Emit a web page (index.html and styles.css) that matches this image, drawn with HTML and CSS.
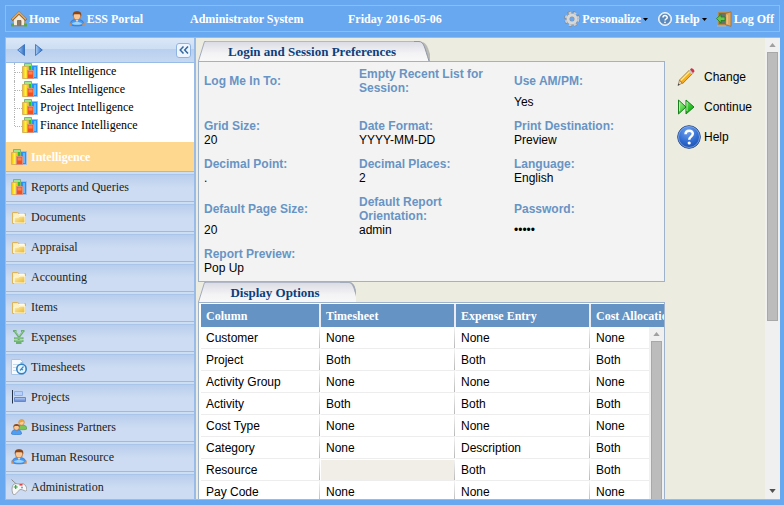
FILE: index.html
```
<!DOCTYPE html>
<html lang="en">
<head>
<meta charset="utf-8">
<title>Login and Session Preferences</title>
<link rel="stylesheet" href="styles.css">
</head>
<body>
<svg class="defs" aria-hidden="true">
  <defs>
    <linearGradient id="gold" x1="0" y1="0" x2="1" y2="1"><stop offset="0" stop-color="#fdf3c0"/><stop offset="1" stop-color="#e9b422"/></linearGradient>
    <linearGradient id="steel" x1="0" y1="0" x2="0" y2="1"><stop offset="0" stop-color="#b7cff7"/><stop offset="1" stop-color="#5f84cf"/></linearGradient>
    <linearGradient id="arrow" x1="0" y1="0" x2="1" y2="0"><stop offset="0" stop-color="#a9cdf5"/><stop offset="1" stop-color="#2f6fc4"/></linearGradient>
    <linearGradient id="tabfill" x1="0" y1="0" x2="0" y2="1"><stop offset="0" stop-color="#dcdce6"/><stop offset=".6" stop-color="#f3f3f5"/><stop offset="1" stop-color="#f8f8f8"/></linearGradient>
    <radialGradient id="orb" cx=".45" cy=".25" r=".8"><stop offset="0" stop-color="#6fa2ee"/><stop offset=".6" stop-color="#2f6bd0"/><stop offset="1" stop-color="#1a4ba8"/></radialGradient>
    <linearGradient id="lime" x1="0" y1="0" x2="1" y2="1"><stop offset="0" stop-color="#b8f5a0"/><stop offset=".6" stop-color="#2fc42a"/><stop offset="1" stop-color="#148a14"/></linearGradient>
    <linearGradient id="yel" x1="0" y1="0" x2="1" y2="0"><stop offset="0" stop-color="#f5b800"/><stop offset=".5" stop-color="#fff04a"/><stop offset="1" stop-color="#f0b400"/></linearGradient>
  </defs>
  <symbol id="bars" viewBox="0 0 16 16">
    <path d="M9.500 2.500h6v13h-6z" fill="#2494fa" stroke="#a3bfe6"/>
    <path d="M12 4h2v10h-2z" fill="#66b8ff"/>
    <path d="M2.500.500h7v8h-7z" fill="#2fc02a" stroke="#7fb57c"/>
    <path d="M3 1h6v2H3z" fill="#9be88f"/>
    <path d="M.500 3.500h6v12h-6z" fill="url(#yel)" stroke="#d9b45c"/>
    <path d="M5.500 7.500h6v8h-6z" fill="#f4501f" stroke="#dc8f78"/>
    <path d="M6.500 8.500h4v3h-4z" fill="#ff8350"/>
  </symbol>
  <symbol id="folder" viewBox="0 0 16 16">
    <path d="M1.500 14.500v-11h5l1.500 1h6.500v10z" fill="#fbe7a0" stroke="#dcb25a"/>
    <path d="M2.500 5.500h5l1-1h5v2h-11z" fill="#fffbe8"/>
    <path d="M3 8h4.500l1.500-1h5v7H3z" fill="url(#gold)" stroke="#fffdf0"/>
  </symbol>
  <symbol id="person" viewBox="0 0 16 16">
    <path d="M1.200 13.500c0-3.500 2.300-5 6.800-5s6.800 1.500 6.800 5c-1 1.800-12.600 1.800-13.600 0z" fill="#4699f2" stroke="#2a6cc0" stroke-width=".7"/>
    <path d="M3 12.500c2-2 8-2 10 0-1 1.800-9 1.800-10 0z" fill="#9ad4ff"/>
    <path d="M1 11.500v2.500h1.800M15 11.500v2.500h-1.800" fill="none" stroke="#d98f4d" stroke-width="1.300"/>
    <path d="M6 8h4l-2 3z" fill="#fff"/>
    <ellipse cx="8" cy="5" rx="3.700" ry="4" fill="#f9c898" stroke="#a9622c" stroke-width=".7"/>
    <path d="M3.800 5C3.500 1.500 5 .3 8 .3s4.800 1.200 4.200 4.700L11 3.200H5z" fill="#8a4519"/>
  </symbol>
  <symbol id="triangle" viewBox="0 0 8 5"><path d="M0 5 4 0l4 5z"/></symbol>
</svg>

<header class="topbar">
  <nav class="topbar-left">
    <a href="#" class="top-link">
      <svg class="icon" viewBox="0 0 16 16"><path d="M2.500 8v6.500h11V8L8 3z" fill="#f4ecd8" stroke="#b3a27e"/><path d="M.8 9 8 2l7.200 7" fill="none" stroke="#8d5a28" stroke-width="2.600"/><path d="M1 8.500 8 1.700l7 6.800" fill="none" stroke="#e0a860" stroke-width="1.600"/><path d="M6.500 9.500h3.500v5H6.500z" fill="#8e7c68" stroke="#6e5a45" stroke-width=".7"/><path d="M0 12.500h3v3H0zM13 12.500h3v3h-3z" fill="#5da348"/><path d="M3 15h10" stroke="#8f8b84"/></svg>
      Home</a>
    <a href="#" class="top-link"><svg class="icon"><use href="#person"/></svg>ESS Portal</a>
  </nav>
  <span class="top-user">Administrator System</span>
  <span class="top-date">Friday 2016-05-06</span>
  <nav class="topbar-right">
    <button type="button" class="top-link">
      <svg class="icon" viewBox="0 0 16 16"><circle cx="8" cy="8" r="6.500" fill="none" stroke="#85898e" stroke-width="3" stroke-dasharray="2.600 2.500"/><circle cx="8" cy="8" r="4" fill="none" stroke="#8c9298" stroke-width="4"/><circle cx="8" cy="8" r="4" fill="none" stroke="#d6d8da" stroke-width="3"/><circle cx="8" cy="8" r="6.300" fill="none" stroke="#c9cdd0" stroke-width="2" stroke-dasharray="2.600 2.500"/></svg>
      Personalize<svg class="caret" viewBox="0 0 5 3"><path d="M0 0h5L2.500 3z"/></svg></button>
    <button type="button" class="top-link">
      <svg class="icon" viewBox="0 0 16 16"><circle cx="8" cy="8" r="6.500" fill="#dce7f3" stroke="#eef4fb"/><circle cx="8" cy="8" r="5" fill="#5b8abf" stroke="#4a76a8" stroke-width=".6"/><path d="M6 6.500C6 4 10.200 4 10.200 6.400 10.200 8 8 8 8 9.500" fill="none" stroke="#fff" stroke-width="1.500"/><circle cx="8" cy="11.300" r=".9" fill="#fff"/></svg>
      Help<svg class="caret" viewBox="0 0 5 3"><path d="M0 0h5L2.500 3z"/></svg></button>
    <a href="#" class="top-link">
      <svg class="icon" viewBox="0 0 16 16"><path d="M2.500 1.500h12v12h-12z" fill="#69716d" stroke="#b58745"/><path d="M9.500 2.500 15 .800v14.500l-5.500-1.500z" fill="#dca964" stroke="#96662f" stroke-width=".7"/><path d="M11.200 4v9" stroke="#efcb91"/><path d="M.5 7.500 5 3.500V6h4v3.500H5v2.500z" fill="#66c94d" stroke="#267b27" stroke-width=".8"/><path d="M1 15h9" stroke="#b5b7b2"/></svg>
      Log Off</a>
  </nav>
</header>

<div class="workspace">
  <aside class="sidebar">
    <div class="side-tools">
      <button type="button" class="step" aria-label="Back"><svg viewBox="0 0 8 12"><path d="M7.500.500v11L.700 6z" fill="url(#arrow)" stroke="#2d68b8" stroke-width=".8"/></svg></button>
      <button type="button" class="step" aria-label="Forward"><svg viewBox="0 0 8 12"><path d="M.500.500v11L7.300 6z" fill="url(#arrow)" stroke="#2d68b8" stroke-width=".8"/></svg></button>
      <button type="button" class="collapse" aria-label="Collapse"><svg viewBox="0 0 10 8"><path d="M4.500.500 1.200 4l3.300 3.500M9 .500 5.700 4 9 7.500" fill="none" stroke="#3468a0" stroke-width="1.500"/></svg></button>
    </div>
    <ul class="tree">
      <li><a href="#"><svg class="icon"><use href="#bars"/></svg>HR Intelligence</a></li>
      <li><a href="#"><svg class="icon"><use href="#bars"/></svg>Sales Intelligence</a></li>
      <li><a href="#"><svg class="icon"><use href="#bars"/></svg>Project Intelligence</a></li>
      <li><a href="#"><svg class="icon"><use href="#bars"/></svg>Finance Intelligence</a></li>
    </ul>
    <nav class="sections">
      <button type="button" class="section is-active"><svg class="icon"><use href="#bars"/></svg>Intelligence</button>
      <button type="button" class="section"><svg class="icon"><use href="#bars"/></svg>Reports and Queries</button>
      <button type="button" class="section"><svg class="icon"><use href="#folder"/></svg>Documents</button>
      <button type="button" class="section"><svg class="icon"><use href="#folder"/></svg>Appraisal</button>
      <button type="button" class="section"><svg class="icon"><use href="#folder"/></svg>Accounting</button>
      <button type="button" class="section"><svg class="icon"><use href="#folder"/></svg>Items</button>
      <button type="button" class="section">
        <svg class="icon" viewBox="0 0 16 16"><path d="M2 2h3.500M10 2h3.500M3.500 2 8 8l4.500-6M7.700 7.500V14M3 9.300h9.500M3 12h9.500M5 14h5.500" fill="none" stroke="#6aae70" stroke-width="2"/><path d="m4 2 4 5 4-5M3.500 9h8M3.500 11.700h8" fill="none" stroke="#a5d6a4" stroke-width=".8"/></svg>Expenses</button>
      <button type="button" class="section">
        <svg class="icon" viewBox="0 0 16 16"><path d="M.5.500h9l3 3v12H.5z" fill="#f8fbff" stroke="#a9c6e6"/><path d="M2 5.500h8M2 8.500h5M2 11.500h3" stroke="#c5dcf0"/><circle cx="10.500" cy="10" r="4.700" fill="#e9f6ff" stroke="#3181c3" stroke-width="1.600"/><path d="m9 11.500 3.500-4M10.500 10l1.500 1M9.500 4h2.500" fill="none" stroke="#3c8ccc" stroke-width="1.200"/></svg>Timesheets</button>
      <button type="button" class="section">
        <svg class="icon" viewBox="0 0 16 16"><path d="M1.500 1v13.500" stroke="#263247"/><path d="M3.500 2.500h8v4h-8z" fill="#b6d0fb" stroke="#8eafe6"/><path d="M3.500 8.500h11v4h-11z" fill="url(#steel)" stroke="#6787c5"/></svg>Projects</button>
      <button type="button" class="section">
        <svg class="icon" viewBox="0 0 16 16"><path d="M6 10c0-3 2-4 5-4s5 1 4.800 4c-1 1-9 1-9.800 0z" fill="#7cc45a" stroke="#4c9440" stroke-width=".6"/><circle cx="10.500" cy="3.500" r="2.700" fill="#f9cc98" stroke="#b87a3b" stroke-width=".6"/><path d="M7.500 4C7.500 1 9 .300 10.700.300 13 .300 14 2 13.300 4l-1-1.500z" fill="#e6a23f"/><path d="M.5 15c0-3 1.500-4.500 5-4.500s5 1.500 5 4.500c-1 1-9 1-10 0z" fill="#4d9ff5" stroke="#2f6cbc" stroke-width=".6"/><circle cx="5.500" cy="8.500" r="2.800" fill="#f9c898" stroke="#9d5a2a" stroke-width=".6"/><path d="M2.500 8.500C2 6 3.500 5 5.500 5s3.600 1 3 3.500L7.500 7h-4z" fill="#8f4c1e"/></svg>Business Partners</button>
      <button type="button" class="section"><svg class="icon"><use href="#person"/></svg>Human Resource</button>
      <button type="button" class="section">
        <svg class="icon" viewBox="0 0 16 16"><path d="M5.500 5C4 4 3 3 .5 .5" fill="none" stroke="#8a8a8a"/><path d="M2.500 5.500c2-1.500 3.500-.5 5.500-.5s3.500-1 5.500.5c2 2 2.800 4.500 2 6-1 1.500-3.500-1-5.500-1s-2 1-3 2c-2 2.500-4 4-5 2.500C1 13 .3 8 2.500 5.500z" fill="#f8f8f8" stroke="#909090" stroke-width=".8"/><path d="M4.700 6v4M2.700 8h4" stroke="#35a33b" stroke-width="1.200"/><path d="M8.500 5.800h3" stroke="#e04545" stroke-width="1.600"/><circle cx="11" cy="8.500" r="1" fill="#8796bb"/></svg>Administration</button>
    </nav>
  </aside>

  <main class="content">
    <div class="panels">
      <section>
        <h2 class="tab">
          <svg class="tab-left" viewBox="0 0 8 20"><path d="M0 20 6.500.500H8V20z" fill="url(#tabfill)"/><path d="M.5 20 6.500.500H8" fill="none" stroke="#a2a9bd"/></svg>
          <span class="tab-text">Login and Session Preferences</span>
          <svg class="tab-right" viewBox="0 0 16 20"><path d="M6 1c6 0 7 3 10 12v7h-6z" fill="#b9bbb4"/><path d="M0 .5h5c5 0 5.500 6 10 19.500H0z" fill="url(#tabfill)"/><path d="M0 .5h5c5 0 5.500 6 10 19.500" fill="none" stroke="#8d97a8"/></svg>
        </h2>
        <dl class="fields">
          <div><dt>Log Me In To:</dt><dd></dd></div>
          <div><dt>Empty Recent List for Session:</dt><dd></dd></div>
          <div><dt>Use AM/PM:</dt><dd>Yes</dd></div>
          <div><dt>Grid Size:</dt><dd>20</dd></div>
          <div><dt>Date Format:</dt><dd>YYYY-MM-DD</dd></div>
          <div><dt>Print Destination:</dt><dd>Preview</dd></div>
          <div><dt>Decimal Point:</dt><dd>.</dd></div>
          <div><dt>Decimal Places:</dt><dd>2</dd></div>
          <div><dt>Language:</dt><dd>English</dd></div>
          <div><dt>Default Page Size:</dt><dd>20</dd></div>
          <div><dt>Default Report Orientation:</dt><dd>admin</dd></div>
          <div><dt>Password:</dt><dd>•••••</dd></div>
          <div><dt>Report Preview:</dt><dd>Pop Up</dd></div>
        </dl>
      </section>
      <section class="options">
        <h2 class="tab">
          <svg class="tab-left" viewBox="0 0 8 20"><path d="M0 20 6.500.500H8V20z" fill="url(#tabfill)"/><path d="M.5 20 6.500.500H8" fill="none" stroke="#a2a9bd"/></svg>
          <span class="tab-text">Display Options</span>
          <svg class="tab-right" viewBox="0 0 16 20"><path d="M7 0c5 0 8 2 9 10v10h-3z" fill="#a3a9af"/><path d="M0 .5h7c5 0 6 3 9 14V20H0z" fill="url(#tabfill)"/><path d="M0 .5h9c4 0 5 3 6.500 10" fill="none" stroke="#a4abba"/></svg>
        </h2>
        <div class="grid-box">
          <table class="grid">
            <thead>
              <tr><th scope="col" class="first">Column</th><th scope="col">Timesheet</th><th scope="col">Expense Entry</th><th scope="col">Cost Allocation</th></tr>
            </thead>
            <tbody>
              <tr><td>Customer</td><td>None</td><td>None</td><td>None</td></tr>
              <tr><td>Project</td><td>Both</td><td>Both</td><td>Both</td></tr>
              <tr><td>Activity Group</td><td>None</td><td>None</td><td>None</td></tr>
              <tr><td>Activity</td><td>Both</td><td>Both</td><td>Both</td></tr>
              <tr><td>Cost Type</td><td>None</td><td>None</td><td>None</td></tr>
              <tr><td>Category</td><td>None</td><td>Description</td><td>Both</td></tr>
              <tr><td>Resource</td><td class="disabled"></td><td>Both</td><td>Both</td></tr>
              <tr><td>Pay Code</td><td>None</td><td>None</td><td>None</td></tr>
            </tbody>
          </table>
          <div class="scroll scroll-inner" aria-hidden="true"><svg class="scroll-arrow"><use href="#triangle"/></svg><div class="thumb"></div></div>
        </div>
      </section>
    </div>
    <div class="actions">
      <a href="#" class="action">
        <span class="action-icon"><svg width="18" height="18" viewBox="0 0 18 18"><path d="m1 17.500 1.500-5.500L5.500 15z" fill="#f5d9ac" stroke="#8b7659" stroke-width=".7"/><path d="M2.500 12 12.500 2l3.300 3.300L5.700 15.500z" fill="#f3ae24" stroke="#9d651a" stroke-width=".8"/><path d="m3.700 12.500 9-9" stroke="#ffe680" stroke-width="1.500"/><path d="m11.500 3 3.300 3.300 1.300-1.300L13 1.800z" fill="#c6cbd1"/><path d="m13 1.500 1-1c1-.7 4 1.500 3.300 3.200L16 5z" fill="#d92d48"/><path d="m.8 17.600.8-2 1.200 1.200z" fill="#333"/></svg></span>Change</a>
      <a href="#" class="action">
        <span class="action-icon"><svg width="18" height="16" viewBox="0 0 18 16"><path d="M1.500 1v14L9 8zM9 1v14l8-7z" fill="url(#lime)" stroke="#187f1b" stroke-linejoin="round"/><path d="M2.500 3v9M10 3v9" stroke="#b5eda7"/></svg></span>Continue</a>
      <a href="#" class="action">
        <span class="action-icon"><svg width="24" height="24" viewBox="0 0 24 24"><circle cx="12" cy="12" r="11.300" fill="url(#orb)" stroke="#2a4f8c"/><circle cx="12" cy="12" r="10.500" fill="none" stroke="#8fb4ee" stroke-width=".7"/><path d="M8.500 9.300c.2-5 7.500-4.500 7.300-.5-.2 3-3.600 2.700-3.600 6" fill="none" stroke="#fff" stroke-width="2.500"/><circle cx="12.200" cy="18" r="1.600" fill="#fff"/></svg></span>Help</a>
    </div>
    <div class="scroll scroll-main" aria-hidden="true">
      <svg class="scroll-arrow"><use href="#triangle"/></svg>
      <div class="thumb"></div>
      <svg class="scroll-arrow scroll-down"><use href="#triangle"/></svg>
    </div>
  </main>
</div>
</body>
</html>
```
FILE: styles.css
```
* {
  box-sizing: border-box;
}

body {
  margin: 0;
  height: 100vh;
  padding: 5px 4px 5px 5px;
  display: flex;
  flex-direction: column;
  gap: 5px;
  overflow: hidden;
  background: #68a8f0;
  color: #000;
  font-family: "Liberation Sans", Arial, sans-serif;
  font-size: 12px;
  line-height: 14px;
}

a {
  color: inherit;
  text-decoration: none;
}

button {
  margin: 0;
  padding: 0;
  border: 0;
  background: none;
  color: inherit;
  font: inherit;
  text-align: left;
}

ul,
dl,
dd,
h2 {
  margin: 0;
  padding: 0;
  list-style: none;
}

svg {
  display: block;
}

.defs {
  position: absolute;
  width: 0;
  height: 0;
}

.icon {
  width: 16px;
  height: 16px;
  flex: none;
}

/* Top bar */
.topbar {
  flex: none;
  height: 27px;
  display: flex;
  align-items: center;
  padding: 0 5px;
  border: 1px solid #8fbaf3;
  color: #fff;
  font: bold 12px/16px "Liberation Serif", "Times New Roman", serif;
}

.topbar-left,
.topbar-right {
  display: flex;
  gap: 9px;
}

.topbar-left {
  width: 179px;
}

.topbar-right {
  margin-left: auto;
}

.top-link {
  display: flex;
  align-items: center;
  gap: 2px;
  white-space: nowrap;
}

.caret {
  width: 5px;
  height: 3px;
  margin-top: 2px;
  fill: #000;
}

.top-user {
  width: 158px;
}

/* Workspace */
.workspace {
  flex: 1;
  min-height: 0;
  display: grid;
  grid-template-columns: 191px minmax(0, 1fr);
  grid-template-rows: minmax(0, 1fr);
  border-top: 1px solid #99bbe8;
  border-bottom: 1px solid #99bbe8;
}

.sidebar {
  display: flex;
  flex-direction: column;
  overflow: hidden;
  border: solid #99bbe8;
  border-width: 0 2px 0 1px;
  background: #fff;
  font: 12px/16px "Liberation Serif", "Times New Roman", serif;
}

.side-tools {
  flex: none;
  height: 25px;
  display: flex;
  align-items: center;
  gap: 10px;
  padding: 0 3px 0 11px;
  border-bottom: 1px solid #99bbe8;
  background: linear-gradient(#dae7f7, #cddef3 45%, #b8cfee 46%, #c6d9f2);
}

.step svg {
  width: 8px;
  height: 12px;
}

.collapse {
  display: grid;
  place-items: center;
  width: 15px;
  height: 15px;
  margin-left: auto;
  border: 1px solid #8fb4e2;
  border-radius: 3px;
  background: #eef5ff;
}

.collapse svg {
  width: 10px;
  height: 8px;
}

.tree {
  flex: none;
  height: 79px;
  padding-left: 8px;
}

.tree li {
  height: 18px;
  display: flex;
  border-left: 1px dotted #b4b4b4;
}

.tree li:last-child {
  height: 9px;
}

.tree li::before {
  content: "";
  flex: none;
  width: 7px;
  height: 9px;
  border-bottom: 1px dotted #b4b4b4;
}

.tree a {
  display: flex;
  gap: 2px;
  height: 16px;
  white-space: nowrap;
}

.section {
  display: flex;
  align-items: center;
  gap: 4px;
  width: 100%;
  height: 30px;
  padding-left: 5px;
  border-bottom: 1px solid #99bbe8;
  background: linear-gradient(#cddef3 2px, #a9c5ea 2px, #a9c5ea 3px, #b8cdee 3px, #cddcf2 16px, #cddcf2);
  color: #222;
}

.section.is-active {
  background: #ffd890;
  color: #fff;
  font-weight: bold;
}

/* Content */
.content {
  display: grid;
  grid-template-columns: minmax(0, 1fr) 88px 15px;
  grid-template-rows: minmax(0, 1fr);
  background: #ecece0;
}

.panels {
  margin-right: 12px;
  padding: 3px 0 0 2px;
  display: flex;
  flex-direction: column;
  overflow: hidden;
}

.tab {
  display: flex;
  width: max-content;
  min-width: 158px;
  height: 20px;
  color: #0c3f7c;
  font: bold 13px/20px "Liberation Serif", "Times New Roman", serif;
}

.tab svg {
  height: 20px;
  flex: none;
}

.tab-left {
  width: 8px;
}

.tab-right {
  width: 16px;
}

.tab-text {
  flex: 1;
  padding: 0 18px 0 22px;
  border-top: 1px solid #b3b8c8;
  background: linear-gradient(#dcdce6, #f3f3f5 60%, #f8f8f8);
  line-height: 19px;
  text-align: center;
}

.fields {
  display: grid;
  grid-template-columns: repeat(3, minmax(0, 1fr));
  row-gap: 10px;
  padding: 5px 0 6px;
  border: 1px solid #9fb2cc;
  background: #f3f3f3;
}

.fields div {
  display: flex;
  flex-direction: column;
  padding: 0 20px 0 5px;
}

.fields dt {
  flex: 1;
  display: flex;
  align-items: center;
  color: #6894c4;
  font-weight: bold;
}

.fields dd {
  height: 14px;
}

.options {
  flex: 1;
  min-height: 0;
  display: flex;
  flex-direction: column;
}

.grid-box {
  position: relative;
  flex: 1;
  min-height: 0;
  overflow: hidden;
  padding: 1px 0 0 2px;
  border: solid #9fb2cc;
  border-width: 1px 1px 0;
  background: #fff;
}

.grid {
  table-layout: fixed;
  width: 525px;
  border-spacing: 0;
}

.grid th {
  width: 135px;
  height: 23px;
  padding: 0 5px;
  border-right: 2px solid #ececf0;
  background: #6593c3;
  color: #fff;
  font: bold 12px/16px "Liberation Serif", "Times New Roman", serif;
  text-align: left;
}

.grid th.first {
  width: 120px;
}

.grid td {
  height: 22px;
  padding: 0 5px;
  border-right: 1px solid #fff;
  border-bottom: 1px solid #ededed;
  background: linear-gradient(#f4f4f4, #b8b8b8) right / 1px 100% no-repeat #fff;
}

.grid td.disabled {
  border-top: 1px solid #fff;
  background-color: #f1eee8;
}

/* Scroll bars */
.scroll {
  display: flex;
  flex-direction: column;
  align-items: center;
  width: 15px;
  padding-top: 5px;
  background: #f0f0f0;
}

.scroll-arrow {
  flex: none;
  width: 7px;
  height: 4px;
  fill: #a0a0a0;
}

.thumb {
  width: 11px;
  margin-top: 5px;
  border: 1px solid #a8a8a8;
  background: #bcbcbc;
}

.scroll-main .thumb {
  height: 59%;
}

.scroll-down {
  margin: auto 0 6px;
  fill: #505050;
  transform: rotate(180deg);
}

.scroll-inner {
  position: absolute;
  top: 24px;
  right: 0;
  bottom: 0;
}

.scroll-inner .thumb {
  flex: 1;
  border-bottom: 0;
}

/* Actions */
.actions {
  padding-top: 24px;
}

.action {
  display: flex;
  align-items: center;
  gap: 2px;
  height: 30px;
}

.action-icon {
  width: 25px;
}
```
